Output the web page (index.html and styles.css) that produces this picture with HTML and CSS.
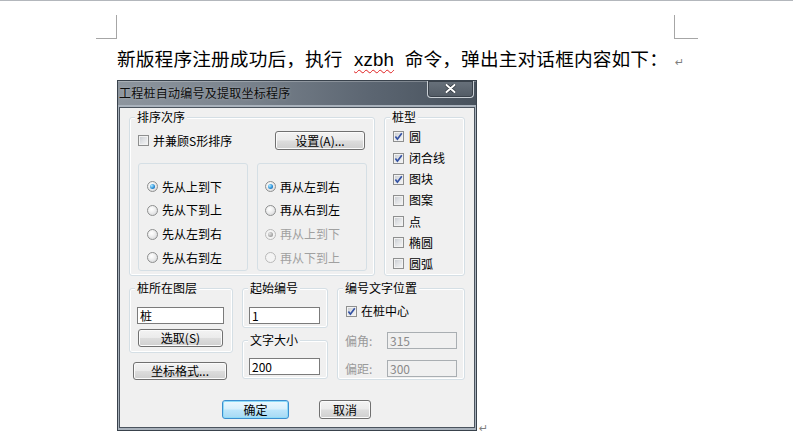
FILE: index.html
```html
<!DOCTYPE html>
<html lang="zh-CN">
<head>
<meta charset="utf-8">
<title>工程桩自动编号及提取坐标程序</title>
<link rel="stylesheet" href="styles.css">
</head>
<body>
<div class="page">
  <div class="marks">
    <span class="mark mark-l"></span>
    <span class="mark mark-r"></span>
  </div>
  <p class="para">新版程序注册成功后，执行 <span class="spell">xzbh</span>&nbsp; 命令，弹出主对话框内容如下：<span class="ret">↵</span></p>
  <div class="figure">
    <div class="dialog">
      <div class="titlebar">
        <span class="title">工程桩自动编号及提取坐标程序</span>
        <span class="close"><svg class="close-x" width="11" height="9" viewBox="0 0 11 9"><path d="M1.5 1 L9.5 8 M9.5 1 L1.5 8" stroke="#2b323a" stroke-width="3.4" stroke-linecap="round"/><path d="M1.5 1 L9.5 8 M9.5 1 L1.5 8" stroke="#ffffff" stroke-width="2" stroke-linecap="round"/></svg></span>
      </div>
      <div class="client">
        <div class="row1">
          <div class="group g-order">
            <span class="legend">排序次序</span>
            <div class="order-top">
              <span class="chk chk-s"><span class="box"></span>并兼顾S形排序</span>
              <span class="btn btn-set">设置(A)...</span>
            </div>
            <div class="order-cols">
              <div class="group g-sub">
                <div class="radio"><span class="rb on"></span>先从上到下</div>
                <div class="radio"><span class="rb"></span>先从下到上</div>
                <div class="radio"><span class="rb"></span>先从左到右</div>
                <div class="radio"><span class="rb"></span>先从右到左</div>
              </div>
              <div class="group g-sub g-sub-r">
                <div class="radio"><span class="rb on"></span>再从左到右</div>
                <div class="radio"><span class="rb"></span>再从右到左</div>
                <div class="radio off"><span class="rb on"></span>再从上到下</div>
                <div class="radio off"><span class="rb"></span>再从下到上</div>
              </div>
            </div>
          </div>
          <div class="group g-type">
            <span class="legend">桩型</span>
            <div class="types">
              <span class="chk"><span class="box"><svg class="tick" width="9" height="9" viewBox="0 0 9 9"><path d="M1.4 4.6 L3.4 7.2 L7.8 1.2" stroke="#3452a4" stroke-width="1.7" fill="none"/></svg></span>圆</span>
              <span class="chk"><span class="box"><svg class="tick" width="9" height="9" viewBox="0 0 9 9"><path d="M1.4 4.6 L3.4 7.2 L7.8 1.2" stroke="#3452a4" stroke-width="1.7" fill="none"/></svg></span>闭合线</span>
              <span class="chk"><span class="box"><svg class="tick" width="9" height="9" viewBox="0 0 9 9"><path d="M1.4 4.6 L3.4 7.2 L7.8 1.2" stroke="#3452a4" stroke-width="1.7" fill="none"/></svg></span>图块</span>
              <span class="chk"><span class="box"></span>图案</span>
              <span class="chk"><span class="box"></span>点</span>
              <span class="chk"><span class="box"></span>椭圆</span>
              <span class="chk"><span class="box"></span>圆弧</span>
            </div>
          </div>
        </div>
        <div class="row2">
          <div class="col-a">
            <div class="group g-layer">
              <span class="legend">桩所在图层</span>
              <span class="input in-layer">桩</span>
              <span class="btn btn-pick">选取(S)</span>
            </div>
            <span class="btn btn-coord">坐标格式...</span>
          </div>
          <div class="col-b">
            <div class="group g-start">
              <span class="legend">起始编号</span>
              <span class="input in-num">1</span>
            </div>
            <div class="group g-size">
              <span class="legend">文字大小</span>
              <span class="input in-num in-size">200</span>
            </div>
          </div>
          <div class="group g-pos">
            <span class="legend">编号文字位置</span>
            <span class="chk chk-center"><span class="box"><svg class="tick" width="9" height="9" viewBox="0 0 9 9"><path d="M1.4 4.6 L3.4 7.2 L7.8 1.2" stroke="#3452a4" stroke-width="1.7" fill="none"/></svg></span>在桩中心</span>
            <div class="field"><span class="flabel">偏角:</span><span class="input in-off">315</span></div>
            <div class="field field-2"><span class="flabel">偏距:</span><span class="input in-off">300</span></div>
          </div>
        </div>
        <div class="row3">
          <span class="btn btn-ok">确定</span>
          <span class="btn btn-cancel">取消</span>
        </div>
      </div>
    </div>
    <span class="ret ret-fig">↵</span>
  </div>
</div>
</body>
</html>
```

FILE: styles.css
```css
* { box-sizing: border-box; }
html, body { margin: 0; padding: 0; background: #ffffff; }
body {
  width: 793px;
  height: 441px;
  overflow: hidden;
  font-family: "Noto Sans CJK SC", "Liberation Sans", sans-serif;
  color: #000000;
}
.page { border-top: 1px solid #b3b7bc; height: 441px; }

/* crop marks */
.marks { display: flex; margin-top: 14px; height: 24px; }
.mark { display: block; height: 24px; border-bottom: 1px solid #a6a6a6; }
.mark-l { margin-left: 96px; width: 21px; border-right: 1px solid #a6a6a6; }
.mark-r { margin-left: 557px; width: 24px; border-left: 1px solid #a6a6a6; }

/* paragraph */
.para {
  margin: 9px 0 0 117px;
  height: 24px;
  font-family: "Liberation Sans", "Noto Sans CJK SC", sans-serif;
  font-size: 18.67px;
  line-height: 24px;
  white-space: nowrap;
  letter-spacing: 0.15px;
}
.spell {
  margin-left: 6px;
  text-decoration: underline wavy #e02020;
  text-decoration-thickness: 1px;
  text-underline-offset: 3px;
}
.ret {
  font-family: "DejaVu Sans", sans-serif;
  font-size: 11px;
  color: #7f7f7f;
  margin-left: 7px;
  letter-spacing: 0;
}

/* figure */
.figure { margin: 8px 0 0 117px; display: flex; align-items: flex-end; }
.ret-fig { margin: 0 0 -3px 2px; line-height: 11px; }

.dialog {
  width: 360px;
  height: 351px;
  border: 1px solid #39424c;
  background: #a9b2bc;
  padding: 0 1px 2px 1px;
  display: flex;
  flex-direction: column;
  font-size: 12px;
}
.titlebar {
  height: 24px;
  margin: 0 -1px;
  display: flex;
  align-items: flex-start;
  background: linear-gradient(to right, #8d959e 0%, #7a838d 35%, #5c6672 70%, #47515c 100%);
  box-shadow: inset 0 1px 0 rgba(255,255,255,0.25);
}
.title {
  margin: 5px 0 0 1px;
  font-size: 12px;
  line-height: 14px;
  letter-spacing: 0.25px;
  color: #0c0c0c;
  text-shadow: 0 0 3px rgba(255,255,255,0.35);
}
.close {
  margin-left: auto;
  margin-right: 2px;
  width: 47px;
  height: 17px;
  border: 1px solid #c9cfd5;
  border-top: none;
  border-radius: 0 0 4px 4px;
  background: linear-gradient(#68717b, #525b65);
  box-shadow: inset 0 0 0 1px #3a424b;
  display: flex;
  justify-content: center;
  padding-top: 3px;
}
.close-x { display: block; }

.client {
  flex: 1;
  margin-top: 2px;
  border: 1px solid #4b545e;
  background: #f0f0f0;
  padding: 9px 0 0 9px;
}

/* group boxes */
.group {
  border: 1px solid #d5dfe5;
  border-radius: 3px;
  box-shadow: inset 0 0 0 1px #ffffff;
}
.legend {
  display: block;
  width: fit-content;
  height: 14px;
  margin: -8px 0 0 5px;
  padding: 0 2px;
  background: #f0f0f0;
  line-height: 14px;
  white-space: nowrap;
}

.row1 { display: flex; gap: 9px; height: 159px; }
.g-order { width: 246px; height: 159px; }
.g-type { width: 81px; height: 159px; }

.order-top {
  display: flex;
  align-items: center;
  justify-content: space-between;
  height: 19px;
  margin-top: 7px;
  padding: 0 9px 0 8px;
}
.order-cols { display: flex; gap: 9px; margin-top: 13px; padding-left: 8px; }
.g-sub { width: 110px; height: 108px; padding-top: 11px; box-shadow: none; }
.radio {
  display: flex;
  align-items: center;
  gap: 4px;
  height: 23.67px;
  padding-left: 8px;
  line-height: 14px;
  white-space: nowrap;
}
.g-sub-r .radio { padding-left: 7px; }
.radio.off { color: #a0a0a0; }

/* radio button */
.rb {
  position: relative;
  flex: none;
  width: 11px;
  height: 11px;
  border: 1px solid #8e8f8f;
  border-radius: 50%;
  background: radial-gradient(circle at 40% 35%, #ffffff 0%, #f2f2f2 35%, #cfd1d4 100%);
}
.rb.on::after {
  content: "";
  position: absolute;
  left: 2px;
  top: 2px;
  width: 5px;
  height: 5px;
  border-radius: 50%;
  background: radial-gradient(circle at 35% 35%, #b8ecff 0%, #2b93dc 55%, #134d8c 100%);
}
.radio.off .rb { border-color: #b9b9b9; background: #f4f4f4; }
.radio.off .rb.on::after { background: radial-gradient(circle at 35% 35%, #e4e4e4 0%, #a9a9a9 60%, #8a8a8a 100%); }

/* check box */
.chk {
  display: flex;
  align-items: center;
  gap: 5px;
  line-height: 14px;
  white-space: nowrap;
}
.chk-s { gap: 4px; }
.box {
  flex: none;
  width: 11px;
  height: 11px;
  border: 1px solid #8e8f8f;
  background: linear-gradient(135deg, #c4c8cd 0%, #dfe1e4 45%, #f7f7f7 100%);
  box-shadow: inset 0 0 0 1px #f2f2f2;
  display: flex;
  align-items: center;
  justify-content: center;
}
.tick { display: block; }

.types { padding-top: 2.4px; }
.types .chk { height: 21.15px; padding-left: 8px; }

/* buttons */
.btn {
  display: flex;
  align-items: center;
  justify-content: center;
  border: 1px solid #707070;
  border-radius: 3px;
  background: linear-gradient(#f3f3f3 0%, #ebebeb 48%, #dddddd 52%, #cfcfcf 100%);
  box-shadow: inset 0 0 0 1px #fbfbfb;
  font-size: 12px;
  line-height: 14px;
  white-space: nowrap;
}
.btn-set { width: 90px; height: 19px; }
.btn-pick { width: 85px; height: 18px; margin: 5px 0 0 1px; }
.btn-coord { width: 94px; height: 18px; margin: 9px 0 0 4px; }
.btn-ok {
  width: 67px;
  height: 19px;
  border-color: #3c8fd0;
  background: linear-gradient(#ecf8fe 0%, #d8f0fc 48%, #bde6fb 52%, #a6d9f4 100%);
  box-shadow: inset 0 0 0 1px #8fdcf8;
}
.btn-cancel { width: 52px; height: 19px; }

/* text inputs */
.input {
  display: flex;
  align-items: center;
  border: 1px solid #7b7b7b;
  background: #ffffff;
  padding-left: 2px;
  line-height: 14px;
}
.in-layer { width: 87px; height: 17px; margin-top: 12px; }
.in-num { width: 71px; height: 17px; margin-top: 12px; }
.in-size { margin-top: 11px; }
.in-off {
  width: 70px;
  height: 17px;
  border-color: #a9aeb2;
  background: #f0f0f0;
  color: #8a8a8a;
}

.row2 { display: flex; gap: 9px; margin-top: 12px; align-items: flex-start; }
.col-a { width: 104px; display: flex; flex-direction: column; align-items: flex-start; }
.g-layer { width: 104px; height: 65px; padding-left: 7px; display: flex; flex-direction: column; align-items: flex-start; }
.g-layer .legend { margin-left: -2px; }
.col-b { width: 86px; display: flex; flex-direction: column; }
.g-start { height: 40px; padding-left: 6px; display: flex; flex-direction: column; align-items: flex-start; }
.g-size { height: 39px; margin-top: 12px; padding-left: 6px; display: flex; flex-direction: column; align-items: flex-start; }
.g-start .legend, .g-size .legend { margin-left: -1px; }
.g-pos { width: 128px; height: 92px; padding-left: 7px; }
.g-pos .legend { margin-left: -2px; }
.chk-center { height: 16px; margin-top: 8px; padding-left: 1px; gap: 4px; }
.field { display: flex; align-items: center; height: 17px; margin-top: 13px; }
.field-2 { margin-top: 11px; }
.flabel { width: 42px; color: #9a9a9a; line-height: 14px; }

.row3 { display: flex; gap: 30px; margin: 20px 0 0 93px; }
```
